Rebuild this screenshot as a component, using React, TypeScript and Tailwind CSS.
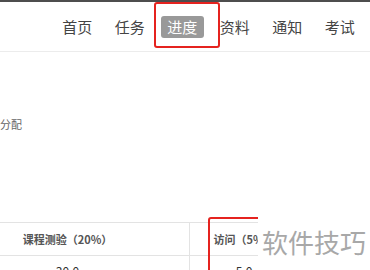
const font = { fontFamily: '"Noto Sans CJK SC", "Noto Sans", sans-serif' };

const navItems = ["首页", "任务", "进度", "资料", "通知", "考试"];

export default function App() {
  return (
    <div className="relative w-[370px] h-[270px] overflow-hidden bg-white" style={font}>
      {/* top strip */}
      <div className="h-[2px] bg-[#4d4d4d]" />

      {/* header nav */}
      <div className="h-[50px] flex items-center justify-end pr-[4px] border-b border-[#ececec]">
        {navItems.map((item) => (
          <div key={item} className="w-[52.5px] flex justify-center">
            {item === "进度" ? (
              <span className="w-[43px] h-[22px] flex items-center justify-center rounded-[3px] bg-[#999999] text-white text-[15px] leading-none">
                {item}
              </span>
            ) : (
              <span className="text-[15px] leading-none text-[#444]">{item}</span>
            )}
          </div>
        ))}
      </div>

      {/* body */}
      <div className="pt-[67px] -ml-[33px] text-[11px] leading-none text-[#666]">
        按比例分配
      </div>

      {/* score table */}
      <div className="mt-[92px] -ml-[54px] w-[500px] border-t border-[#e3e3e3] text-[11px]">
        <div className="flex h-[33px] border-b border-[#e3e3e3] font-bold text-[#555]">
          <div className="w-[244px] flex items-center justify-center border-r border-[#e3e3e3]">
            课程测验（20%）
          </div>
          <div className="w-[108px] flex items-center justify-center">访问（5%）</div>
        </div>
        <div className="flex h-[30px] text-[12px] text-[#333]">
          <div className="w-[244px] flex items-center justify-center border-r border-[#e3e3e3]">30.0</div>
          <div className="w-[108px] flex items-center justify-center">5.0</div>
        </div>
      </div>

      {/* annotation boxes */}
      <div className="absolute left-[154px] top-[2px] w-[66px] h-[46px] border-2 border-[#e5231f] rounded-[3px]" />
      <div className="absolute left-[208px] top-[217px] w-[80px] h-[80px] border-2 border-[#e5231f] rounded-[3px]" />

      {/* watermark */}
      <div className="absolute left-[258px] top-[212px] w-[120px] h-[70px] bg-white flex items-start pt-[17px] pl-[4px] text-[26px] leading-none text-[#a8a8a8]">
        软件技巧
      </div>
    </div>
  );
}
